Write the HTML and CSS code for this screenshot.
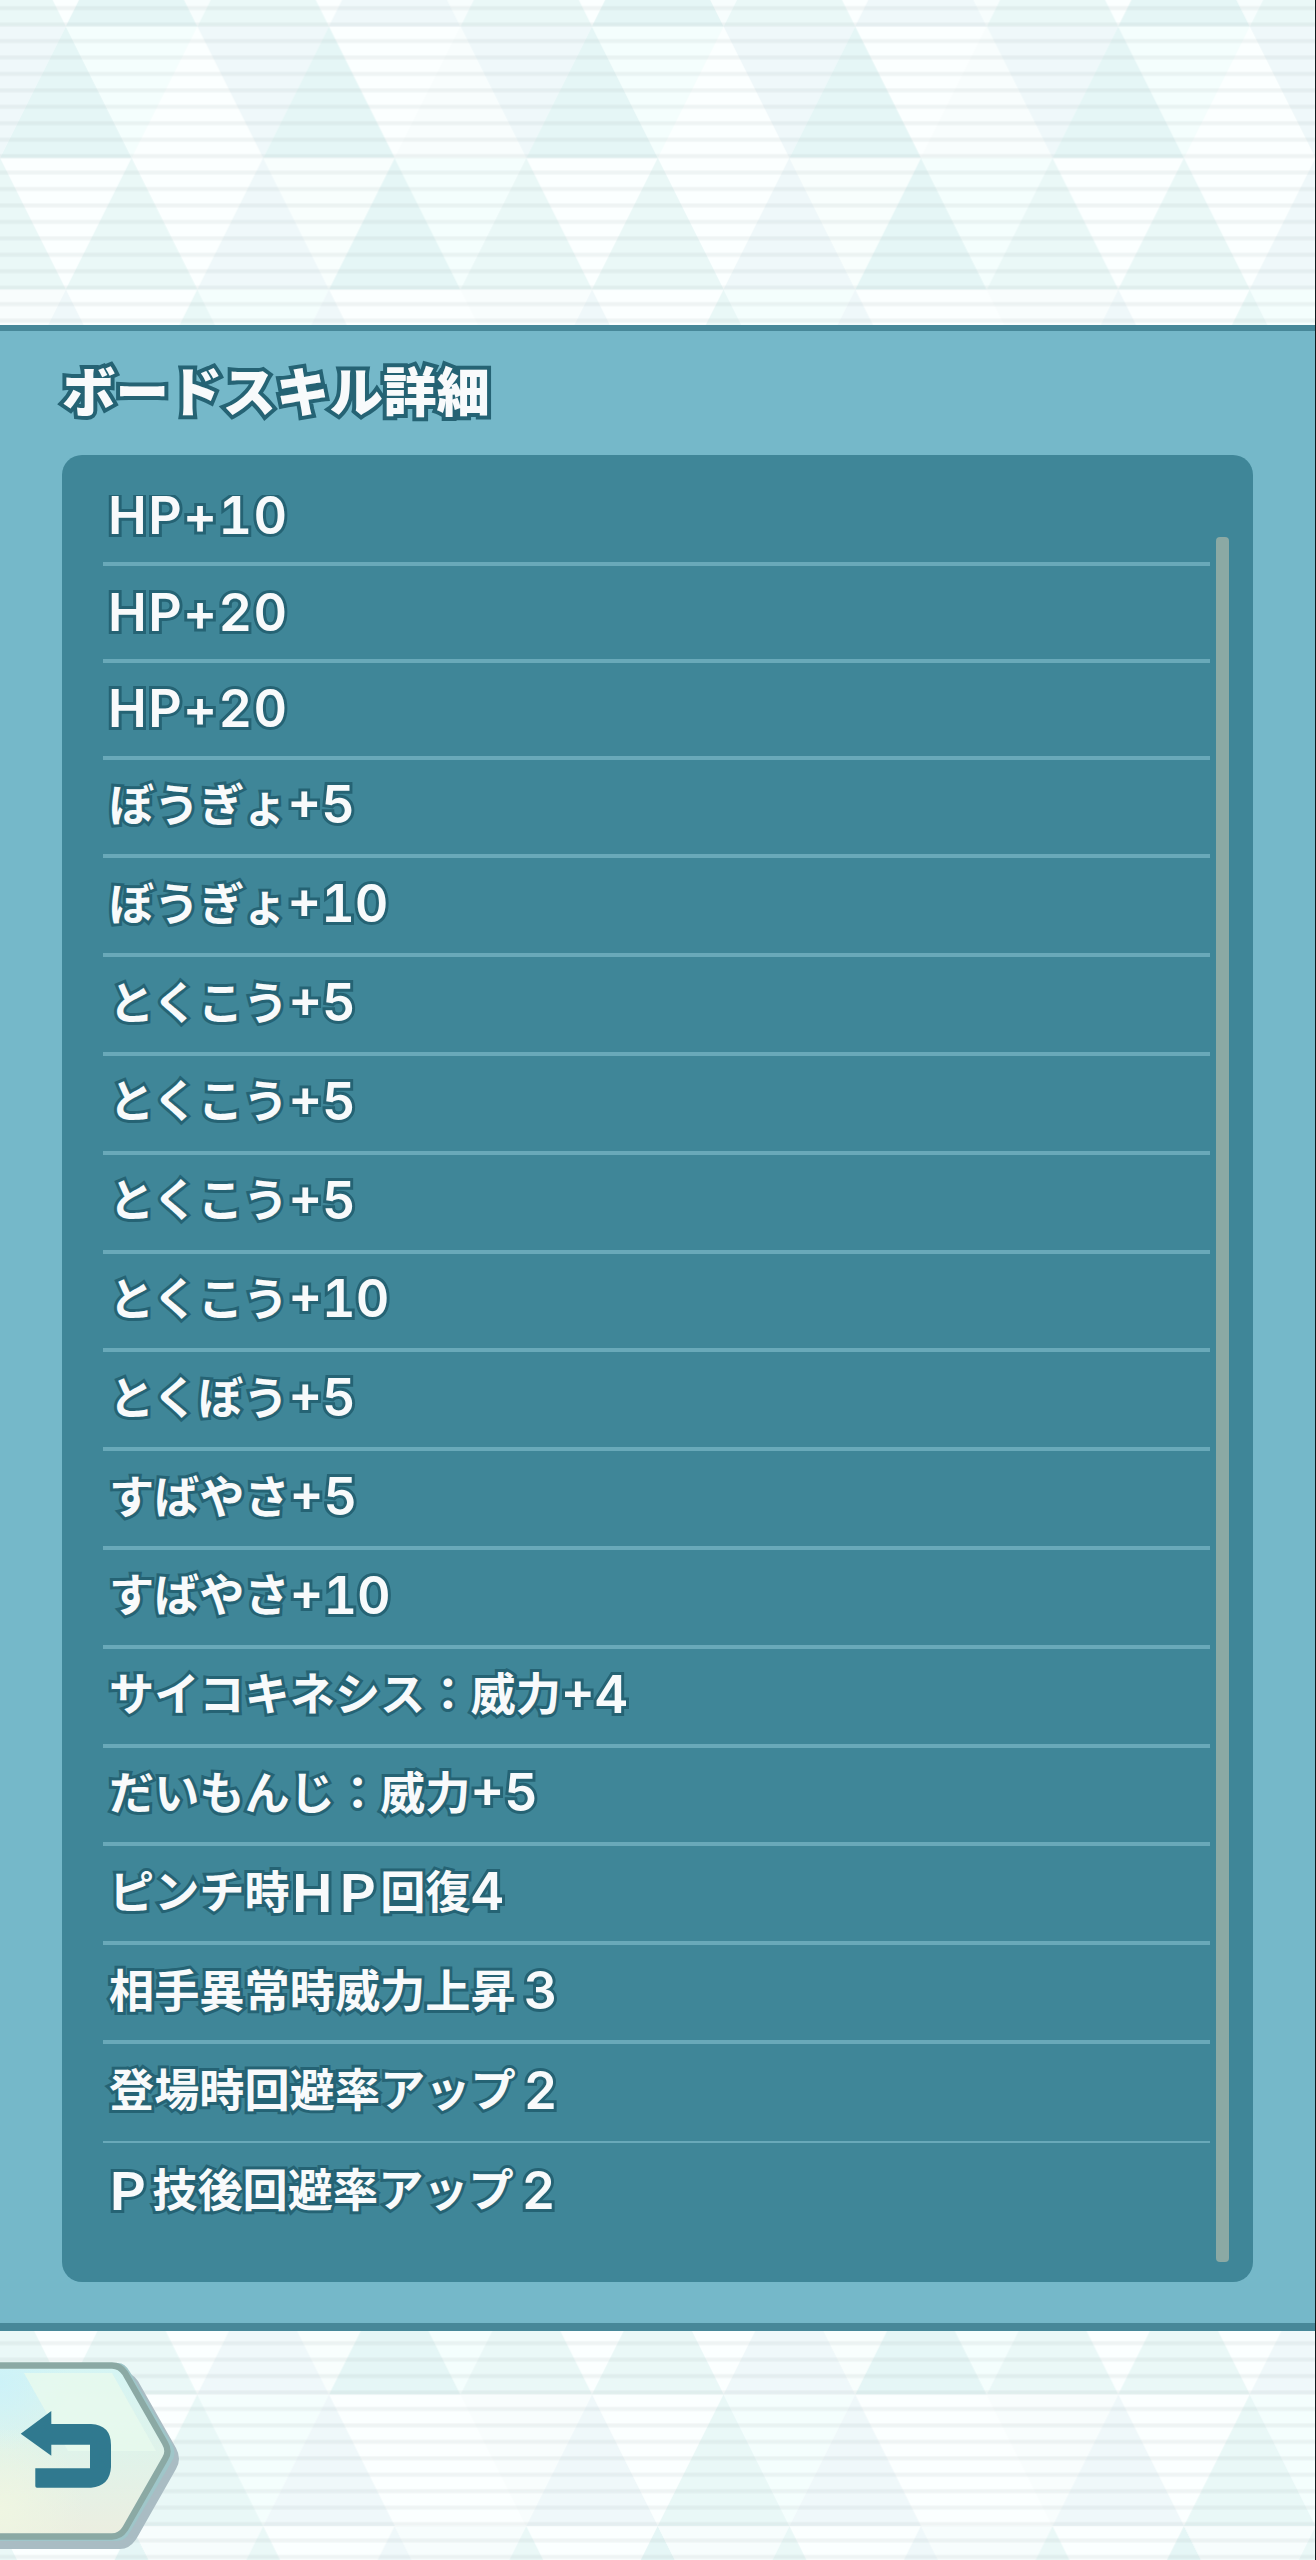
FILE: index.html
```html
<!DOCTYPE html>
<html lang="ja">
<head>
  <meta charset="UTF-8">
  <meta name="viewport" content="width=device-width, initial-scale=1.0">
  <title>ボードスキル詳細</title>
  <link rel="stylesheet" href="styles.css">
</head>
<body>
  <svg class="backdrop" width="1316" height="2560" aria-hidden="true">
    <defs>
      <pattern id="stripe" width="20" height="16.444" y="4.8" patternUnits="userSpaceOnUse">
        <rect y="1" width="20" height="4.6" fill="#a3b3b0" opacity=".09"/>
        <rect y="2" width="20" height="2.6" fill="#a3b3b0" opacity=".06"/>
      </pattern>
      <!-- 4 x 4 cells, half a cell of shift on every second row -->
      <pattern id="tiles" width="4" height="4" patternUnits="userSpaceOnUse" patternTransform="translate(0 -105.2) scale(131.56)">
        <rect width="4" height="4" fill="#fbffff"/>
        <path fill="#e5f6f6" d="M1 0l.5 1h-1z"/>
        <path fill="#eaf8f7" d="M2 0l.5 1h-1zM0 0l.5 1H0zM4 0v1h-.5z"/>
        <path fill="#eff8fa" d="M3 0l.5 1h-1z"/>
        <path fill="#f7fdfd" d="M1 0h1l-.5 1zM3 0h1l-.5 1z"/>

        <path fill="#e5f6f6" d="M.5 1L1 2H0zM2.5 1L3 2H2z"/>
        <path fill="#eff8fa" d="M0 1h.5L0 2zM3.5 1H4v1zM1.500 1h1L2 2z"/>
        <path fill="#f4fefd" d="M.5 1h1L1 2z"/>
        <path fill="#f8fdfd" d="M3.500 1L4 2H3z"/>

        <path fill="#eaf8f7" d="M0 2l.5 1H0zM4 2v1h-.5zM1 2l.5 1h-1z"/>
        <path fill="#eff8fa" d="M2 2l.5 1h-1z"/>
        <path fill="#e5f6f6" d="M3 2l.5 1h-1z"/>
        <path fill="#f8fefd" d="M2 2h1l-.5 1z"/>
        <path fill="#f4fefd" d="M3 2h1l-.5 1z"/>

        <path fill="#eff8fa" d="M.5 3L1 4H0zM2.5 3L3 4H2z"/>
        <path fill="#e9f8f7" d="M1.5 3L2 4H1z"/>
        <path fill="#f4fefd" d="M1.5 3h1L2 4z"/>
        <path fill="#f8fdfd" d="M3.5 3H4v1zM0 3h.5L0 4z"/>
      </pattern>
    </defs>
    <rect width="1316" height="2560" fill="url(#tiles)"/>
    <rect width="1316" height="2560" fill="url(#stripe)"/>
  </svg>

  <main class="panel">
    <h1 class="title">ボードスキル詳細</h1>
    <div class="box">
      <div class="viewport">
        <ul class="skills">
          <li class="short"><span class="num">HP+10</span></li>
          <li class="short"><span class="num">HP+20</span></li>
          <li class="short"><span class="num">HP+20</span></li>
          <li>ぼうぎょ<span class="num">+5</span></li>
          <li>ぼうぎょ<span class="num">+10</span></li>
          <li>とくこう<span class="num">+5</span></li>
          <li>とくこう<span class="num">+5</span></li>
          <li>とくこう<span class="num">+5</span></li>
          <li>とくこう<span class="num">+10</span></li>
          <li>とくぼう<span class="num">+5</span></li>
          <li>すばやさ<span class="num">+5</span></li>
          <li>すばやさ<span class="num">+10</span></li>
          <li>サイコキネシス：威力<span class="num">+4</span></li>
          <li>だいもんじ：威力<span class="num">+5</span></li>
          <li>ピンチ時<span class="wide">ＨＰ</span>回復<span class="num">4</span></li>
          <li>相手異常時威力上昇<span class="num level">3</span></li>
          <li class="thin">登場時回避率アップ<span class="num level">2</span></li>
          <li><span class="wide first">Ｐ</span>技後回避率アップ<span class="num level">2</span></li>
        </ul>
      </div>
      <div class="scrollbar"></div>
    </div>
  </main>

  <footer class="footer">
    <button class="back" aria-label="もどる">
      <svg width="184" height="195" viewBox="0 0 184 195">
        <defs>
          <linearGradient id="face" x1="0" y1="0" x2="0" y2="1">
            <stop offset="0" stop-color="#d5f5f4"/>
            <stop offset=".5" stop-color="#dff3ea"/>
            <stop offset="1" stop-color="#eceee0"/>
          </linearGradient>
          <radialGradient id="blue" cx="0" cy="22" r="70" gradientUnits="userSpaceOnUse">
            <stop offset="0" stop-color="#cdf2f8"/>
            <stop offset="1" stop-color="#cdf2f8" stop-opacity="0"/>
          </radialGradient>
          <radialGradient id="warm" cx="0" cy="150" r="85" gradientUnits="userSpaceOnUse">
            <stop offset="0" stop-color="#eff6e2"/>
            <stop offset="1" stop-color="#eff6e2" stop-opacity="0"/>
          </radialGradient>
        </defs>
        <path fill="#a9bcc3" d="M-10 12H122Q132 12 138 21L176 88Q182 99 176 109L138 176Q131 189 120 189H-10z"/>
        <path fill="#9fc6c9" d="M-10 3H118Q125 3 130 12L172 84Q177 93 172 101L130 172Q125 181 117 181H-10z"/>
        <path fill="url(#face)" stroke="#8ba9a4" stroke-width="6.4" d="M-10 5.5H112Q120 5.5 125 13L165 83Q170 91.500 165 99L125 169Q120 176.500 112 176.500H-10z"/>
        <path fill="url(#blue)" d="M0 9H112L68 91H0z"/>
        <path fill="url(#warm)" d="M0 70H90V173H0z"/>
        <path fill="#e7f9ed" opacity=".85" d="M24 13H112L156 91H68z"/>
        <path fill="#30798f" d="M20.700 73.700L51.300 51V64H91Q111 65 111 85V107Q110 126 91 127.700H37Q35.300 127.700 35.300 126V108.300H90V84.700H51.300V95.700z"/>
      </svg>
    </button>
  </footer>
  <div class="edge"></div>
</body>
</html>
```
FILE: styles.css
```css
* {
  box-sizing: border-box;
}
body {
  margin: 0;
  position: relative;
  display: flex;
  flex-direction: column;
  height: 2560px;
  padding-top: 325px;
  overflow: hidden;
  background-color: #fbffff;
  font-family: "Noto Sans CJK JP", sans-serif;
  color: #f8fafb;
}
.backdrop {
  position: absolute;
  top: 0;
  left: 0;
  z-index: -1;
}
.panel {
  height: 2006px;
  padding: 0 63px 0 62px;
  background-color: #75b8c9;
  border-top: 6px solid #478899;
  border-bottom: 8px solid #478899;
}
.title {
  margin: 0;
  height: 124px;
  padding-top: 18px;
  font-size: 53.5px;
  line-height: 80px;
  font-weight: 900;
  -webkit-text-stroke: 8px #256374;
  paint-order: stroke fill;
}
.box {
  display: flex;
  gap: 6px;
  height: 1827px;
  padding: 40px 24px 20px 41px;
  background-color: #3f8698;
  border-radius: 20px;
}
.viewport {
  width: 1107px;
  overflow: hidden;
}
.skills {
  list-style: none;
  margin: -25.5px 0 0;
  padding: 0;
}
.skills li {
  display: flex;
  align-items: center;
  height: 98.8px;
  padding: 0 0 8px 6px;
  border-bottom: 4px solid #69a9b9;
  font-size: 45.2px;
  line-height: 60px;
  font-weight: 700;
  white-space: nowrap;
  -webkit-text-stroke: 6px #256374;
  paint-order: stroke fill;
}
.skills .short {
  height: 96.7px;
  padding-bottom: 5px;
}
.skills .thin {
  border-bottom-width: 2px;
}
.skills li:last-child {
  border-bottom: none;
}
.num {
  margin-top: 5px;
  font-family: Inter, "Liberation Sans", sans-serif;
  font-size: 52px;
  font-weight: 600;
  font-variant-numeric: tabular-nums;
}
.short .num {
  letter-spacing: 1.5px;
  margin-left: -1px;
}
.level {
  padding-left: 8px;
}
.wide {
  font-size: 51px;
  letter-spacing: -5.8px;
  margin-left: -3px;
  margin-right: 3px;
}
.first {
  margin-left: -7px;
  margin-right: 5px;
}
.scrollbar {
  width: 13px;
  height: 1725px;
  margin-top: 42px;
  background-color: #8ba9a4;
  border-radius: 4px;
}
.footer {
  padding-top: 29px;
}
.back {
  display: block;
  padding: 0;
  border: none;
  background: none;
  cursor: pointer;
}
.back svg {
  display: block;
}
/* dark line along the right side of the screen */
.edge {
  position: absolute;
  top: 0;
  right: 0;
  width: 1px;
  height: 100%;
  background-color: #101a1c;
}
```
